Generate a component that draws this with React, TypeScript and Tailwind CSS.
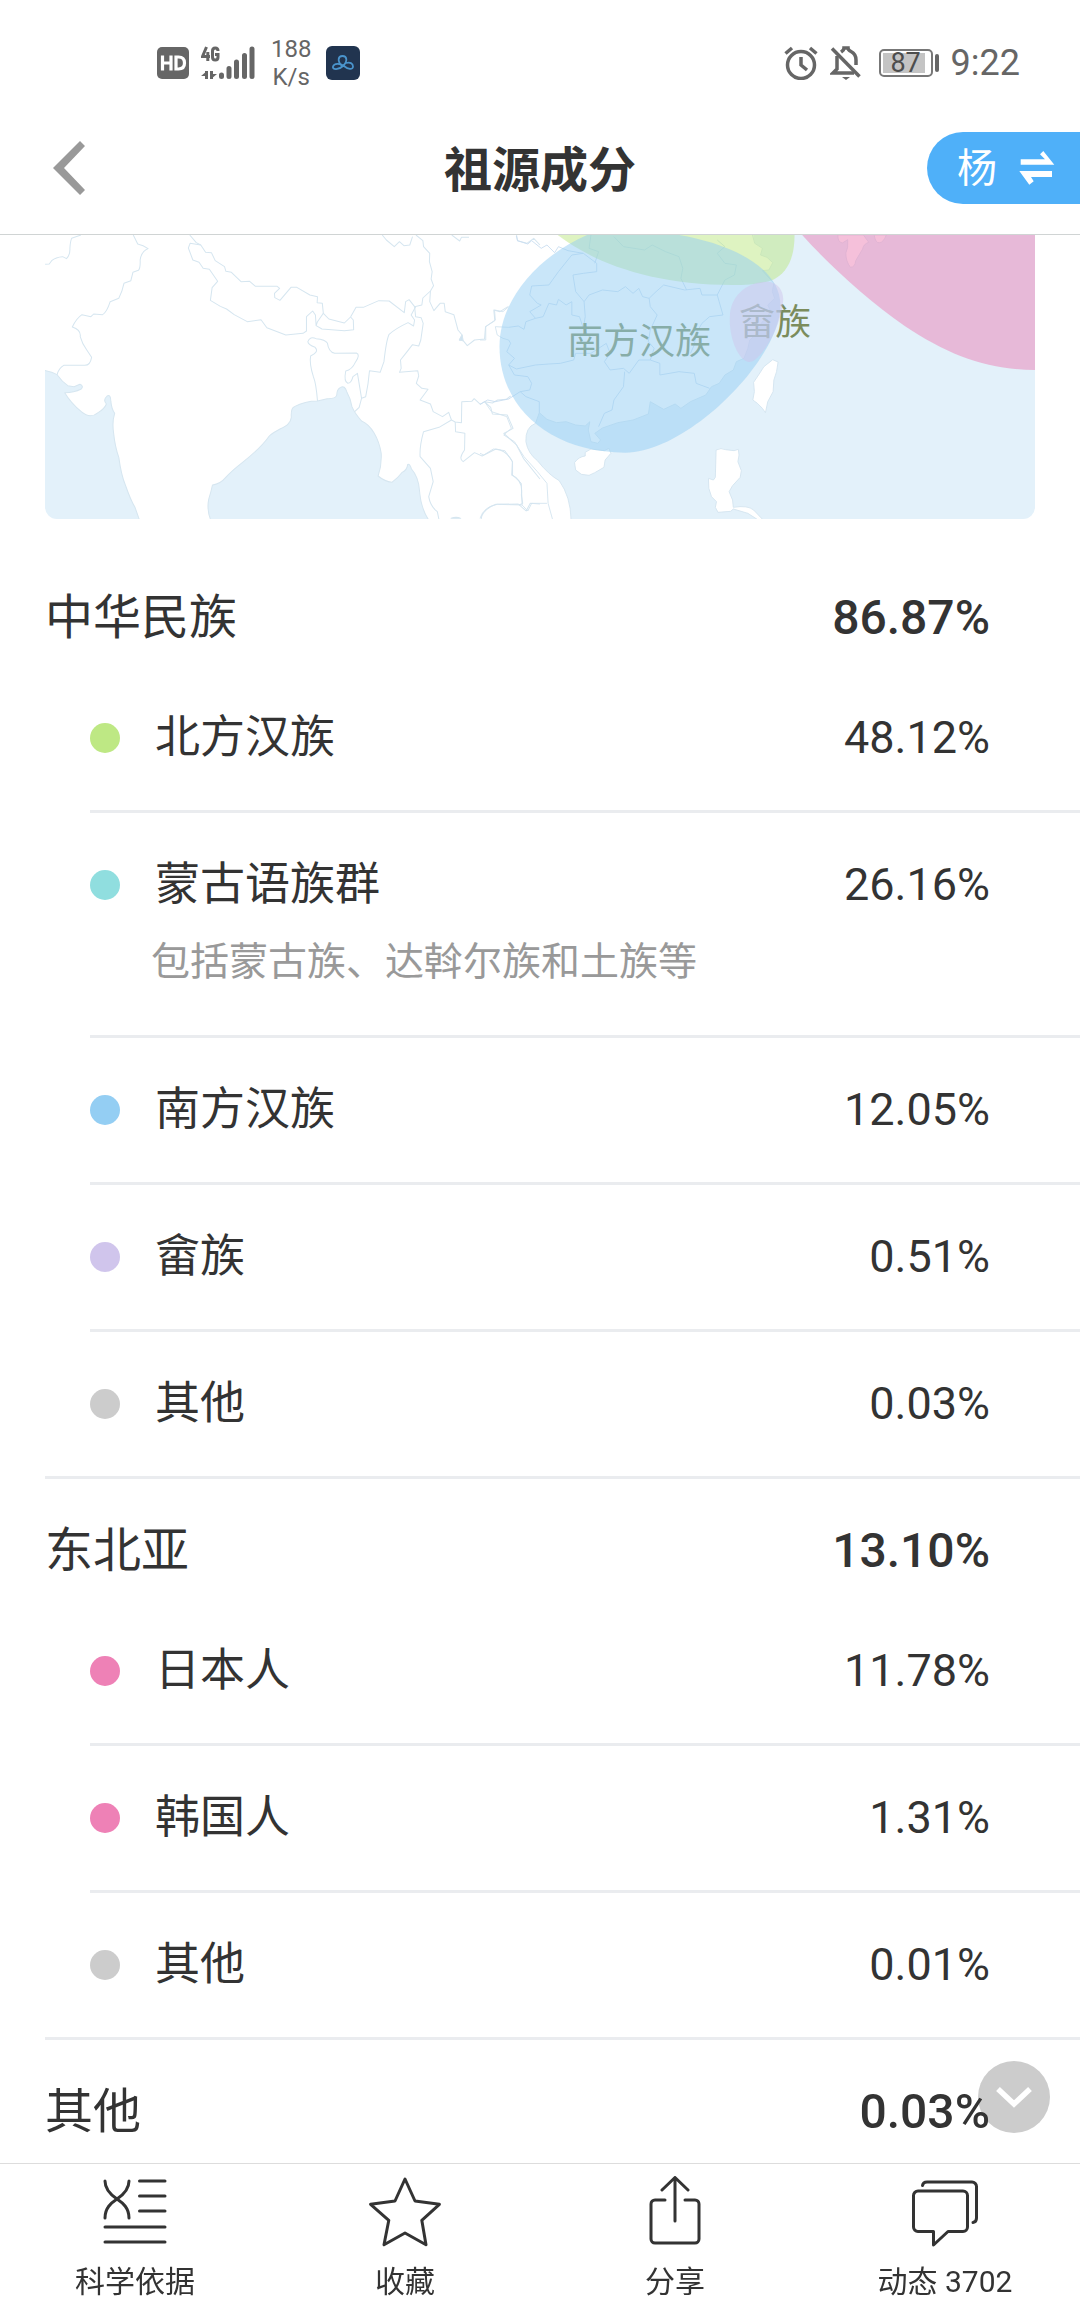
import type { ReactNode } from "react";

type Item = { name: string; value: string; dot: string; note?: string };
type Group = { name: string; value: string; items: Item[] };

const groups: Group[] = [
  {
    name: "中华民族",
    value: "86.87%",
    items: [
      { name: "北方汉族", value: "48.12%", dot: "bg-[#bee884]" },
      { name: "蒙古语族群", value: "26.16%", dot: "bg-[#90dedf]", note: "包括蒙古族、达斡尔族和土族等" },
      { name: "南方汉族", value: "12.05%", dot: "bg-[#94cef3]" },
      { name: "畲族", value: "0.51%", dot: "bg-[#d0c5ec]" },
      { name: "其他", value: "0.03%", dot: "bg-[#cccccc]" },
    ],
  },
  {
    name: "东北亚",
    value: "13.10%",
    items: [
      { name: "日本人", value: "11.78%", dot: "bg-[#ee81b6]" },
      { name: "韩国人", value: "1.31%", dot: "bg-[#ee81b6]" },
      { name: "其他", value: "0.01%", dot: "bg-[#cccccc]" },
    ],
  },
  { name: "其他", value: "0.03%", items: [] },
];

function StatusBar() {
  return (
    <div className="flex h-[102px] items-center justify-between pt-6 pr-[60px] pl-[157px] text-[#666666]">
      <div className="flex items-center">
        <svg width="32" height="32" viewBox="0 0 32 32" aria-label="HD">
          <rect width="32" height="32" rx="5" fill="#666" />
          <path
            d="M5.500 8.500v15M14 8.500v15M5.500 16H14M19 10v12h2.500c4 0 6-2 6-6s-2-6-6-6z"
            fill="none"
            stroke="#fff"
            strokeWidth="3.200"
          />
        </svg>
        <svg className="ml-3" width="54" height="34" viewBox="0 0 54 34" aria-label="4G">
          <g fill="none" stroke="#666" strokeWidth="3">
            <path d="M5.500 1 1.500 10.500H9M6.800 6v9" />
            <path d="M17 5c0-4-5.500-4-5.500 0v6c0 4 5.500 4 5.500 0V8.500h-3" />
            <path d="M5.500 33v-8M10.500 25v8" />
          </g>
          <path d="M0 30l6-5v5zM16 28l-6 5v-5z" fill="#666" />
          <g stroke="#666" strokeWidth="5" strokeLinecap="round">
            <path d="M20.500 29v1.500M28 22.500v8M35.500 16v14.500M43.500 9.500v21M51 3v27.500" />
          </g>
        </svg>
        <div className="ml-4 text-center text-[24px] leading-7">
          <div>188</div>
          <div>K/s</div>
        </div>
        <svg className="ml-[15px]" width="34" height="34" viewBox="0 0 34 34" aria-hidden="true">
          <rect width="34" height="34" rx="6" fill="#21344f" />
          <g fill="none" stroke="#4a94cc" strokeWidth="1.800" strokeLinecap="round">
            <path d="M16 20C11 15 12 10 16.500 10S22 15 17 20C13 24 6 24 7 20.500S14 17 18 20C22 23.500 27 24 27 20.500S24 16 20 17" />
          </g>
        </svg>
      </div>
      <div className="flex items-center">
        <svg width="34" height="34" viewBox="0 0 34 34" fill="none" stroke="#666" aria-label="闹钟">
          <circle cx="17" cy="19" r="13.500" strokeWidth="3.500" />
          <path d="M17 11v8l6 5" strokeWidth="3.500" />
          <path d="M1.500 7.500 8 2M32.500 7.500 26 2" strokeWidth="3.500" />
        </svg>
        <svg className="ml-3" width="32" height="34" viewBox="0 0 32 34" fill="none" stroke="#666" aria-label="静音">
          <path d="M2 2.500 29.500 30.500" strokeWidth="3.500" />
          <path d="M7 10v13l-4 4h21M11 6c2-1.500 3-2 3-4h4c0 2 1 2.500 3 3.500 4 2 5 5 5 8.500v5" strokeWidth="3.500" />
          <path d="M12 31h8l-4 3z" fill="#666" stroke="none" />
        </svg>
        <div className="ml-[17px] flex items-center gap-0.5">
          <div className="h-7 w-[54px] rounded-[5px] border-2 border-[#777777] p-0.5">
            <div className="flex h-full w-[42px] items-center justify-center bg-[#c4c4c4] pl-1 text-[27px] leading-none text-[#4d4d4d]">
              87
            </div>
          </div>
          <div className="h-[18px] w-1 rounded-full bg-[#666666]" />
        </div>
        <div className="ml-3 text-[36px] leading-10">9:22</div>
      </div>
    </div>
  );
}

function Header() {
  return (
    <header className="sticky top-0 z-20 border-b border-[#d0d4d4] bg-white">
      <StatusBar />
      <div className="grid h-[132px] grid-cols-[1fr_auto_1fr] items-center">
        <button type="button" aria-label="返回" className="ml-[53px] w-8">
          <svg width="32" height="54" viewBox="0 0 32 54" fill="#999" aria-hidden="true">
            <path d="M27 0l5 5-21 22 21 22-5 5L0 27z" />
          </svg>
        </button>
        <h1 className="pt-1.5 text-[48px] leading-[72px] font-bold">祖源成分</h1>
        <button
          type="button"
          className="flex h-[72px] items-center gap-[22px] justify-self-end rounded-l-full bg-[#4fb0f9] pr-[25px] pl-[30px] text-[40px] leading-[60px] text-white"
        >
          <span className="pt-0.5">杨</span>
          <svg width="36" height="34" viewBox="0 0 36 34" fill="#fff" aria-hidden="true">
            <path d="M1.700 8.300H26l-5-5L24.300 0l11 13.700H1.700z" />
            <path d="M33 20H.3l10 13.700 4.400-3.400L12 26h21z" />
          </svg>
        </button>
      </div>
    </header>
  );
}

function RegionMap() {
  return (
    <svg
      className="block h-[284px] w-full rounded-b-xl"
      viewBox="0 0 990 284"
      preserveAspectRatio="xMidYMid slice"
      role="img"
      aria-label="祖源分布地图"
    >
      <rect width="990" height="284" fill="#fff" />
      {/* South Asia and Indochina */}
      <g transform="translate(-45 -15) scale(0.34435 0.33333)" stroke="#d6e6f0" strokeWidth="3" strokeLinejoin="round" fill="none">
        <path
          fill="#e3f1fa"
          d="M125 450 L150 457 166 464 Q180 485 197 497 L215 500 232 493 Q244 498 236 507 Q215 518 188 518 Q205 548 237 576 Q262 598 285 578 Q303 567 309 552 Q298 540 311 528 Q322 522 322 545 Q324 567 333 580 Q325 605 330 640 Q334 680 345 712 Q352 765 364 795 Q380 842 392 862 L405 900 H125 Z"
        />
        <path
          fill="#e3f1fa"
          d="M612 900 Q600 870 606 838 Q613 815 617 795 Q640 792 655 773 C690 730 740 710 782 648 C810 622 843 622 846 592 Q844 564 855 560 Q885 543 922 543 L950 536 Q975 537 978 525 Q978 508 989 502 Q1001 495 1007 515 Q1018 535 1022 560 Q1030 580 1050 603 C1078 615 1100 655 1107 700 Q1109 735 1098 768 Q1118 785 1138 787 Q1155 775 1168 757 Q1182 750 1184 733 Q1190 730 1195 747 Q1215 770 1218 810 Q1222 865 1245 900 Z"
        />
        <path d="M131 133 L143 132 150 122 Q162 111 182 110 L193 116 Q204 105 203 85 Q204 65 208 55 L235 45" />
        <path d="M387 45 L400 72 Q416 75 430 86 Q410 95 407 120 Q408 145 402 151 L386 157 380 182 360 190 Q355 215 345 235 L320 245 Q310 277 298 284 L272 282 264 290 238 284 Q222 295 210 321 Q236 330 233 350 Q238 370 252 390 L266 412 Q262 437 245 436 L185 436 Q170 445 166 464" />
        <path d="M551 45 L570 68 583 75 597 97 614 98 625 122 652 140 656 154 672 157 700 185 725 184 742 199 805 199 812 205 797 220 798 233 813 241 845 202 862 202 900 225 922 230 921 248 936 250 939 280 955 297 1000 309 1018 291 1034 262 1055 262 1100 242 1130 243 1174 278 1178 245 1188 239 1204 260 1225 255 1228 234 1250 213 1259 197 1252 177 1255 155 1247 125 1248 100 1230 80 1228 62 1208 45" />
        <path d="M583 75 L552 70 547 84 560 120 578 127 590 145 608 148 632 184 616 203 611 241 640 259 658 267 680 284 718 305 758 299 775 323 830 345 880 340 890 333 890 290 908 273 916 285 918 317 935 327 1000 332 1027 329 1026 300 1018 291M939 280 L922 305 918 317" />
        <path d="M922 543 Q918 490 910 470 Q898 430 902 408 Q928 396 915 382 Q895 375 894 365 Q900 348 918 356 Q945 358 951 370 Q954 395 972 400 L1035 399 Q1047 404 1033 425 Q1022 450 1004 453 Q998 485 1010 490 Q1020 490 1025 470 L1038 460 1050 535 1043 562 1030 575M1050 535 L1062 530 Q1070 490 1073 452 L1104 457 1115 425 Q1122 360 1130 343 Q1150 325 1185 308 L1201 318 1204 300 1194 285 1207 260" />
        <path d="M1204 260 L1207 290 1223 293 1229 310 1222 360 1216 378 1198 374 1180 398 1163 420 1165 445 1160 457 1213 452 1216 468 1209 490 1225 505 1243 508 1220 540 1250 552 1258 575 1285 590 1303 577 1311 600 1322 606 1340 608 1341 545 1370 544 1377 536 1395 553 1407 545 1430 549 1445 540 1470 538 1483 528" />
        <path d="M1250 213 L1248 245 1260 272 1278 250 1290 250 1293 275 1318 284 1330 330 1342 345 1334 360 1345 362 1357 377 1378 360 1407 357 1410 320 1437 302 1434 270 1452 275 1475 260" />
        <path fill="#cfe4f2" d="M1342 345 L1334 360 1345 362z" />
        <path d="M1311 600 L1275 622 1230 635 Q1218 680 1220 710 L1250 745 1258 785 1245 830 Q1250 860 1270 875 L1275 900M1322 606 L1323 635 1350 640 1349 690 Q1330 717 1345 725 L1378 698 1400 708 1440 687 Q1470 690 1488 725 L1486 765 Q1520 780 1514 825 L1518 850 1507 855M1407 545 L1425 562 1430 582 1473 585 1490 625 1463 640 1500 675 1520 715 1568 777" />
        <path d="M1397 900 Q1398 870 1440 853 L1505 852 1528 873 1540 850 1568 852" />
        <path d="M1110 45 L1122 60 1145 80 1160 65 1173 77 1190 75 1198 50M1312 45 L1335 63 1340 52 1362 52M1500 45 L1503 62 1530 70 1550 55 1568 75" />
        <path fill="#cfe4f2" d="M1310 895 q15-6 28 0z" />
      </g>
      {/* East Asia coastline, provinces and islands */}
      <g transform="translate(435 -15) scale(0.38265 0.33333)" stroke="#d3e4ef" strokeWidth="2.500" strokeLinejoin="round" fill="none">
        <path
          fill="#e3f1fa"
          stroke="none"
          d="M712 30 L718 70 738 85 733 105 750 112 765 128 755 150 738 152 768 190 764 215 770 235 752 255 760 275 735 310 725 340 705 360 700 385 690 415 670 425 662 450 640 465 625 490 605 500 590 525 550 545 525 565 510 552 480 568 445 545 440 582 400 600 360 608 320 624 300 640 315 660 308 670 290 665 283 630 287 605 275 618 250 615 225 605 200 608 175 598 155 578 145 610 Q118 622 120 665 Q125 700 150 722 Q180 765 207 782 Q237 830 238 900 H1460 V30 Z"
        />
        <path d="M712 45 L718 70 738 85 733 105 750 112 765 128 755 150 738 152 768 190 764 215 770 235 752 255 760 275 735 310 725 340 705 360 700 385 690 415 670 425 662 450 640 465 625 490 605 500 590 525 550 545 525 565 510 552 480 568 445 545 440 582 400 600 360 608 320 624 300 640 315 660 308 670 290 665 283 630 287 605 275 618 250 615 225 605 200 608 175 598 155 578 145 610 Q118 622 120 665 Q125 700 150 722 Q180 765 207 782 Q237 830 238 900" />
        <g stroke="#c9def0">
          <path d="M95 48 L98 62 125 72 135 62 160 85 175 75 195 98 205 80 230 92 270 100 305 130 305 155 270 160 243 165 250 215 272 245 275 290 270 325 285 350M270 100 L240 105 205 155 180 195 135 198 130 225 150 250 160 255 130 275 145 295 165 290 180 250 200 255 205 238 225 255 240 245 240 285 260 290 270 325" />
          <path d="M272 245 L285 225 320 210 360 215 380 200 400 220 415 205 425 230 442 235 460 215 480 195 535 210 575 205 580 225 620 225 625 245 635 285 600 290 580 310 565 340 560 375 550 400M442 235 L445 260 463 285 445 330 440 365 455 385 445 420 470 430 470 465 520 455 560 460 565 490 600 505M445 420 L415 420 390 460 375 445 340 450 325 425 340 400 330 370M378 455 L375 500 350 540 345 570 325 580 310 620" />
          <path d="M75 435 L95 447 145 435 180 432 210 430 245 420 250 400 290 400 330 370M75 435 L90 465 125 470 135 490 130 510 105 515 120 530 155 545 155 578M105 515 L75 537 40 545 20 540 0 553M75 322 L100 318 115 328 120 305 145 295M75 360 L80 370 70 395 90 415 75 435" />
          <path d="M290 45 L285 85 310 95 300 130M350 50 L375 80 430 90 450 75 485 95 520 110 530 145 525 175 540 210M620 60 L640 80 620 100 640 130 670 135 665 165 640 180 620 225" />
        </g>
        <path d="M75 322 L40 320 45 345 60 355 75 360M0 360 L15 360 15 320 40 300 38 270 60 275 75 260" />
        <path d="M12 545 L30 575 70 590 82 625 62 645 90 665 115 710 150 755 175 790 178 850 190 900M0 700 L10 705 35 687 65 692 85 725 85 765 108 790 110 855 125 873 135 850 175 850M0 895 Q10 860 45 853 L110 855" />
        <g fill="#fff">
          <path d="M765 419 L779 426 775 455 768 480 766 515 752 545 746 578 738 565 725 550 713 540 717 515 715 487 728 465 742 440z" />
          <path d="M247 728 Q258 710 275 708 L275 697 290 687 325 692 337 685 342 700 327 720 324 742 300 758 285 766 265 763 250 750z" />
          <path d="M617 690 Q630 682 642 689 L664 692 675 688 677 705 674 725 683 752 680 772 660 797 651 815 660 840 662 862 Q700 855 715 870 L740 900 H727 L700 880 662 867 655 874 622 877 615 862 618 845 605 830 598 805 597 775 610 780 615 772z" />
          <path d="M935 45 q0 22 12 24 l14-10 q2 25-5 40 q0 25 12 43 q12 0 14-20 l18-35 q2-15 16-20 l-14-22z" />
          <path d="M1030 45 q4 26 14 23 q10 0 18-23z" />
        </g>
      </g>
      <g fill="#7b8c5c" fontSize="36">
        <text x="522" y="119">南方汉族</text>
        <text x="694" y="100">畲族</text>
      </g>
      {/* Ancestry regions laid over the land and its labels */}
      <g transform="translate(435 -15) scale(0.38265 0.33333)" fillOpacity="0.5">
        <path fill="#bee884" d="M203 45 C300 130 450 195 660 195 Q730 195 765 180 C800 160 822 120 822 45z" />
        <path fill="#94cef3" d="M280 45 H520 C650 70 785 140 785 255 C785 420 540 698 380 698 C180 698 51 560 51 380 C51 240 150 110 280 45z" />
        <path fill="#d0c5ec" d="M653 290 C655 225 700 185 752 185 C780 187 795 215 792 245 C785 330 730 426 704 426 C675 424 650 350 653 290z" />
        <path fill="#eb81b6" d="M842 45 C900 120 1010 240 1110 318 C1230 410 1330 450 1460 450 V45z" />
      </g>
    </svg>
  );
}

function Row({ item, last }: { item: Item; last: boolean }) {
  return (
    <li className={last ? "ml-[90px]" : "ml-[90px] border-b-[3px] border-[#eaecef]"}>
      <div className="flex h-36 items-center pr-[90px] text-[45px] leading-[60px]">
        <span className={`size-[30px] shrink-0 rounded-full ${item.dot}`} />
        <span className="ml-[35px] flex-1">{item.name}</span>
        <span>{item.value}</span>
      </div>
      {item.note && (
        <p className="-mt-[25px] pr-[90px] pb-[43px] pl-[61px] text-[39px] leading-[60px] text-[#999999]">{item.note}</p>
      )}
    </li>
  );
}

function GroupSection({ group, last }: { group: Group; last: boolean }) {
  return (
    <section>
      <div className="relative z-10 flex items-center justify-between pt-9 pr-[90px] pb-3 pl-[45px] text-[48px] leading-[72px]">
        <h2>{group.name}</h2>
        <span className="font-medium">{group.value}</span>
      </div>
      <ul>
        {group.items.map((item, i) => (
          <Row key={item.name} item={item} last={i === group.items.length - 1} />
        ))}
      </ul>
      {!last && <div className="ml-[45px] h-[3px] bg-[#eaecef]" />}
    </section>
  );
}

function Tab({ label, children }: { label: string; children: ReactNode }) {
  return (
    <button type="button" className="flex flex-col items-center gap-4 pt-3 pb-2.5 text-[30px] leading-9">
      <svg
        width="72"
        height="72"
        viewBox="0 0 72 72"
        fill="none"
        stroke="#333"
        strokeWidth="3"
        strokeLinecap="round"
        strokeLinejoin="round"
        aria-hidden="true"
      >
        {children}
      </svg>
      {label}
    </button>
  );
}

export default function App() {
  return (
    <div className="flex min-h-screen flex-col bg-white font-[Roboto,'Noto_Sans_CJK_SC',sans-serif] text-[#333333]">
      <Header />
      <main className="flex-1">
        <div className="px-[45px] pb-[27px]">
          <RegionMap />
        </div>
        {groups.map((group, i) => (
          <GroupSection key={group.name} group={group} last={i === groups.length - 1} />
        ))}
      </main>
      <button
        type="button"
        aria-label="向下滚动"
        className="fixed right-[30px] bottom-[177px] flex size-[72px] items-center justify-center rounded-full bg-[#cccccc]"
      >
        <svg width="38" height="24" viewBox="0 0 38 24" fill="none" stroke="#fff" strokeWidth="5.500" aria-hidden="true">
          <path d="M3 4l16 15L35 4" />
        </svg>
      </button>
      <nav className="sticky bottom-0 z-20 grid grid-cols-4 border-t border-[#dddddd] bg-white">
        <Tab label="科学依据">
          <path d="M6 5C6 14 12 19 18 23C24 27 30 32 30 42M30 5C30 14 24 19 18 23C12 27 6 32 6 42" />
          <path d="M40.500 5H66M40.500 20H66M40.500 35H66M6 51H66M6 66H66" />
        </Tab>
        <Tab label="收藏">
          <path d="M36 3L46 25 70.400 28.300 52.800 44.300 57 68.700 36 57 15 68.700 19.800 44.300 1.600 28.300 26 25z" />
        </Tab>
        <Tab label="分享">
          <path d="M26 24H16a4 4 0 0 0-4 4V63a4 4 0 0 0 4 4H56a4 4 0 0 0 4-4V28a4 4 0 0 0-4-4H46M36 2V45M23 14L36 1.500 49 14" />
        </Tab>
        <Tab label="动态 3702">
          <path d="M9 15H54a4.500 4.500 0 0 1 4.500 4.500V51a4.500 4.500 0 0 1-4.500 4.500H39L24.500 69V55.500H9A4.500 4.500 0 0 1 4.500 51V19.500A4.500 4.500 0 0 1 9 15z" />
          <path d="M13.500 9.500Q14 6 18 6H63a4.500 4.500 0 0 1 4.500 4.500V42Q67.500 46 64 46.500" />
        </Tab>
      </nav>
    </div>
  );
}
